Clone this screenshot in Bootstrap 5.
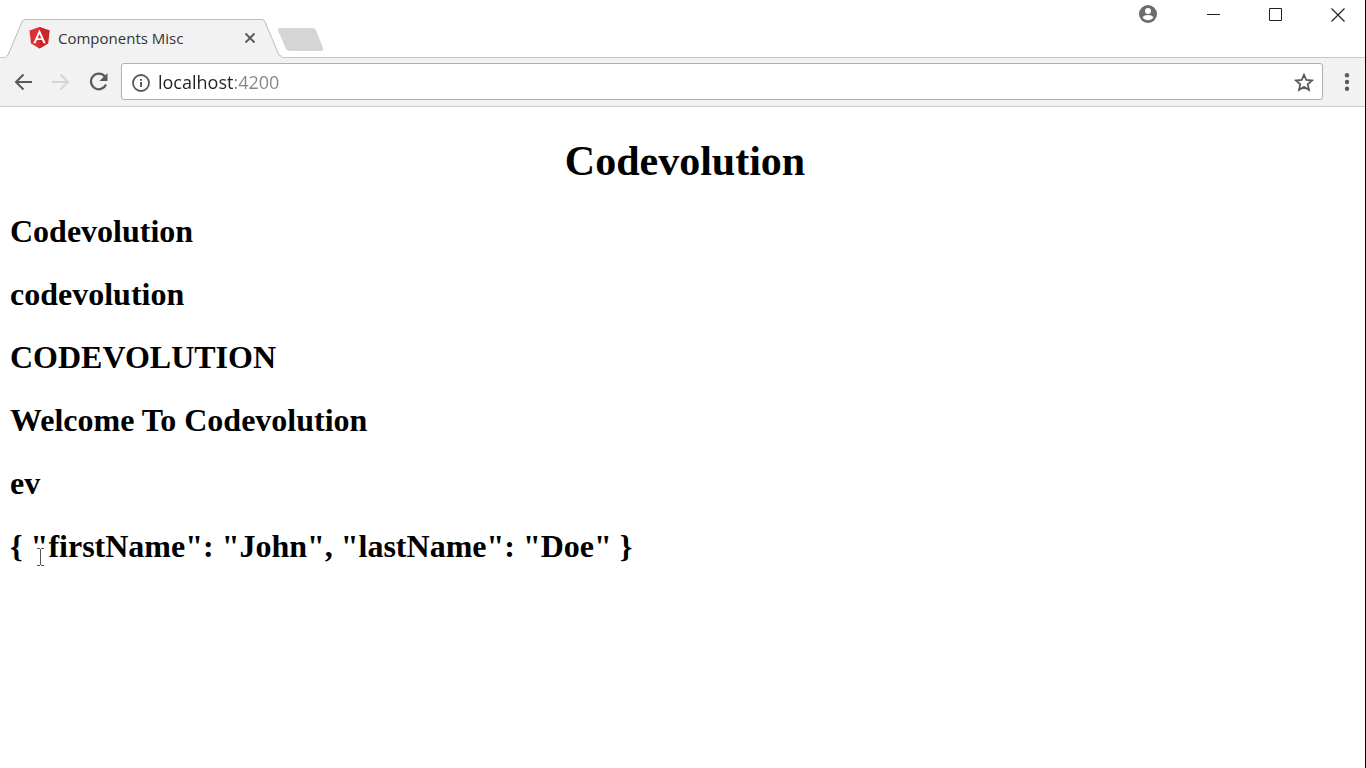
<!DOCTYPE html>
<html lang="en">
<head>
<meta charset="utf-8">
<meta name="viewport" content="width=device-width, initial-scale=1">
<title>Components Misc</title>
<link href="https://cdn.jsdelivr.net/npm/bootstrap@5.3.0/dist/css/bootstrap.min.css" rel="stylesheet">
<style>
  body { font-family: "Open Sans", "Noto Sans", sans-serif; color: #000; }
  .browser { border-right: 1px solid #000; }
  svg { display: block; flex: none; }
  .browser button { border: 0; padding: 0; background: none; color: #5a5a5a; }
  .tab-strip { height: 58px; border-bottom: 1px solid #c8c8c8; padding-left: 6px; }
  .browser-tab { width: 272px; height: 39px; margin-bottom: -1px; padding: 0 22px 2px 23px; font-size: 15px; line-height: 24px; color: #333; }
  .tab-shape { position: absolute; left: 0; top: 0; z-index: -1; }
  .window-buttons { height: 30px; gap: 44px; padding-right: 18px; }
  .window-buttons button { color: #222; }
  .toolbar { height: 49px; background: #f2f2f2; border-bottom: 1px solid #c8c8c8; padding: 0 9px 1px 12px; }
  .nav-buttons { gap: 14px; margin-right: 11px; }
  .address { height: 37px; background: #fff; border: 1px solid #b0b0b0; border-radius: 3px; padding: 0 8px; }
  .url-field {
    border: 0; padding: 0; outline: 0; font-size: 18px; line-height: 26px; color: #222;
    background: linear-gradient(90deg, #222 75px, #858585 75px);
    -webkit-background-clip: text; background-clip: text; -webkit-text-fill-color: transparent;
  }
  .page { font-family: "Liberation Serif", "Times New Roman", serif; padding: 30px 5px 0 10px; }
  .page h1 { font-size: 42px; line-height: 48px; font-weight: 700; margin-bottom: 28px; }
  .page h2 { font-size: 32px; line-height: 36px; font-weight: 700; margin-bottom: 27px; }
  .text-cursor { position: absolute; left: 26px; top: 13px; }
</style>
</head>
<body>
<div class="browser min-vh-100">
  <header>
    <div class="tab-strip d-flex justify-content-between">
      <div class="d-flex align-items-end">
        <div class="browser-tab d-flex align-items-center position-relative z-1">
          <svg class="tab-shape" width="276" height="39" viewBox="0 0 276 39"><path d="M0 37.500L2 36 16 3Q17 .5 19 .5H256Q258 .5 259 3L273 36 276 37.500V39H0z" fill="#f2f2f2"/><path d="M0 37.500L2 36 16 3Q17 .5 19 .5H256Q258 .5 259 3L273 36 276 37.500" fill="none" stroke="#bcbcbc"/></svg>
          <svg width="21" height="22" viewBox="0 0 21 22"><path d="M10.500 0L20.500 3.600 19 16.600 10.500 21.500 2 16.600.5 3.600z" fill="#dd3035"/><path d="M10.500 0L20.500 3.600 19 16.600 10.500 21.500z" fill="#c9252d"/><path d="M10.500 2.600L4.300 16.200H6.600L7.900 13.100H13.100L14.400 16.200H16.700zM10.500 6.900L12.300 11.200H8.700z" fill="#fff" fill-rule="evenodd"/></svg>
          <span class="flex-grow-1 text-nowrap ps-2">Components Misc</span>
          <button type="button" aria-label="Close tab"><svg width="12" height="12" viewBox="0 0 12 12"><path d="M1.500 1.500L10.500 10.500M10.500 1.500L1.500 10.500" stroke="currentColor" stroke-width="1.800"/></svg></button>
        </div>
        <button type="button" aria-label="New tab" class="mb-1"><svg width="46" height="25" viewBox="0 0 46 25"><path d="M.3 3Q-.7 0 2 0H34Q37 0 38 2L45 20Q46 23 43 23H12Q9 23 8 21z" fill="#d5d5d5"/></svg></button>
      </div>
      <div class="window-buttons d-flex align-items-center">
        <button type="button" aria-label="Profile" class="me-1"><svg width="18" height="20" viewBox="0 0 18 20"><circle cx="9" cy="9" r="9" fill="#6c6c6c"/><circle cx="9" cy="6" r="3" fill="#fff"/><path d="M3.500 12.200Q5 9.900 9 9.900T14.500 12.200Q12.500 15.200 9 15.200T3.500 12.200z" fill="#fff"/></svg></button>
        <button type="button" aria-label="Minimize"><svg width="18" height="14" viewBox="0 0 18 14"><path d="M2 6.500H15" stroke="currentColor"/></svg></button>
        <button type="button" aria-label="Maximize"><svg width="18" height="14" viewBox="0 0 18 14"><path d="M2.500.5H14.500V12.500H2.500z" fill="none" stroke="currentColor"/></svg></button>
        <button type="button" aria-label="Close"><svg width="18" height="14" viewBox="0 0 18 14"><path d="M2.500.5L15.500 13.500M15.500.5L2.500 13.500" stroke="currentColor" stroke-width="1.200"/></svg></button>
      </div>
    </div>
    <div class="toolbar d-flex align-items-center">
      <div class="nav-buttons d-flex">
        <button type="button" aria-label="Back"><svg width="24" height="20" viewBox="0 0 24 20"><path d="M20 10H4M11.500 2.500L4 10 11.500 17.500" fill="none" stroke="currentColor" stroke-width="2"/></svg></button>
        <button type="button" aria-label="Forward"><svg width="24" height="20" viewBox="0 0 24 20"><path d="M2 10H18M10.500 2.500L18 10 10.500 17.500" fill="none" stroke="#d5d5d5" stroke-width="2"/></svg></button>
        <button type="button" aria-label="Reload"><svg width="22" height="20" viewBox="0 0 22 20"><path d="M16.800 4.500A7.800 7.800 0 1 0 18 12.500" fill="none" stroke="currentColor" stroke-width="2.200"/><path d="M19.500 1V9H11.500z" fill="currentColor"/></svg></button>
      </div>
      <div class="address d-flex flex-grow-1 align-items-center">
        <button type="button" aria-label="Site information"><svg width="20" height="20" viewBox="0 0 20 20"><circle cx="11" cy="11" r="8" fill="none" stroke="currentColor" stroke-width="1.800"/><path d="M11 10V15M11 7V8.800" stroke="currentColor" stroke-width="2"/></svg></button>
        <input class="url-field flex-grow-1 ms-2" type="text" value="localhost:4200" aria-label="Address" spellcheck="false">
        <button type="button" aria-label="Bookmark"><svg width="20" height="20" viewBox="0 0 20 20"><path d="M10 2.800L12.300 8 18 8.500 13.700 12.300 15 17.900 10 14.900 5 17.900 6.300 12.300 2 8.500 7.700 8z" fill="none" stroke="currentColor" stroke-width="1.800"/></svg></button>
      </div>
      <button type="button" aria-label="Menu" class="ms-3"><svg width="17" height="20" viewBox="0 0 17 20"><g fill="currentColor"><circle cx="8" cy="3.300" r="2.200"/><circle cx="8" cy="10" r="2.200"/><circle cx="8" cy="16.700" r="2.200"/></g></svg></button>
    </div>
  </header>
  <main class="page">
    <h1 class="text-center">Codevolution</h1>
    <h2>Codevolution</h2>
    <h2>codevolution</h2>
    <h2>CODEVOLUTION</h2>
    <h2>Welcome To Codevolution</h2>
    <h2>ev</h2>
    <h2 class="position-relative">{ "firstName": "John", "lastName": "Doe" }
      <svg class="text-cursor" width="9" height="26" viewBox="0 0 9 26"><path d="M1 7.500H4M5 7.500H8M4.500 8V24M1 24.500H4M5 24.500H8" fill="none" stroke="#555"/></svg>
    </h2>
  </main>
</div>
<script src="https://cdn.jsdelivr.net/npm/bootstrap@5.3.0/dist/js/bootstrap.bundle.min.js"></script>
</body>
</html>
